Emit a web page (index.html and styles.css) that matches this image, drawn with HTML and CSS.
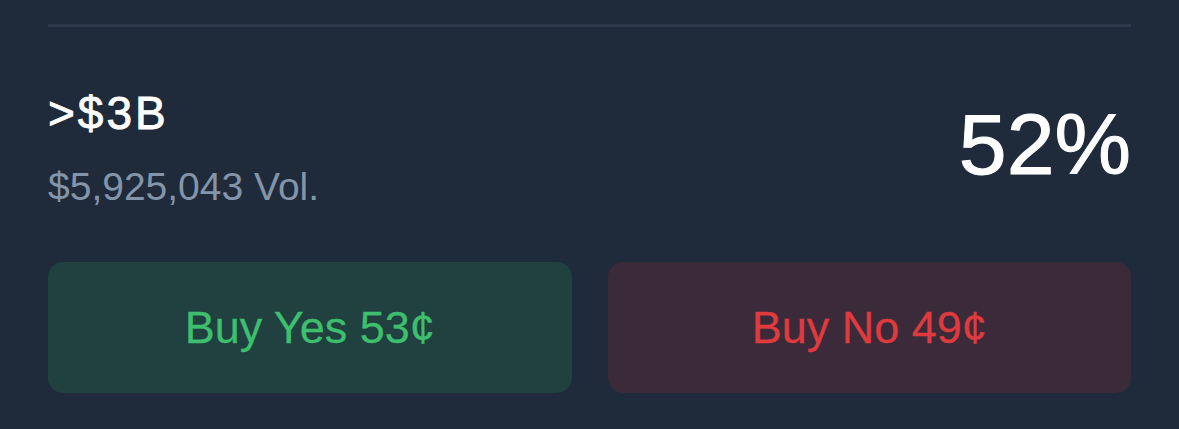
FILE: index.html
```html
<!DOCTYPE html>
<html lang="en">
<head>
<meta charset="utf-8">
<title>Market outcome</title>
<link rel="stylesheet" href="styles.css">
</head>
<body>
<section class="outcome">
  <div class="divider"></div>
  <div class="summary">
    <div class="info">
      <div class="title">&gt;$3B</div>
      <div class="volume">$5,925,043 Vol.</div>
    </div>
    <div class="chance">52%</div>
  </div>
  <div class="actions">
    <button class="btn btn-yes">Buy Yes 53¢</button>
    <button class="btn btn-no">Buy No 49¢</button>
  </div>
</section>
</body>
</html>
```
FILE: styles.css
```css
html, body {
  margin: 0;
  padding: 0;
  background: #1f2a3b;
}
body {
  font-family: "Liberation Sans", Arial, sans-serif;
  width: 1179px;
  height: 429px;
  overflow: hidden;
}
.outcome {
  padding: 24px 48px 0;
}
.divider {
  height: 3px;
  background: #2e3a4b;
}
.summary {
  display: flex;
  justify-content: space-between;
  align-items: center;
  margin-top: 60px;
}
.info {
  display: flex;
  flex-direction: column;
  gap: 25px;
}
.title {
  color: #ffffff;
  font-size: 46px;
  line-height: 52px;
  letter-spacing: 3px;
  -webkit-text-stroke: 0.9px #ffffff;
}
.volume {
  color: #8495a9;
  font-size: 39px;
  line-height: 46px;
}
.chance {
  color: #ffffff;
  font-size: 86px;
  line-height: 86px;
  -webkit-text-stroke: 1px #ffffff;
  margin-bottom: 10px;
}
.actions {
  display: grid;
  grid-template-columns: 1fr 1fr;
  gap: 36px;
  margin-top: 52px;
}
.btn {
  height: 131px;
  border: none;
  border-radius: 15px;
  font-family: inherit;
  font-size: 45px;
  display: flex;
  align-items: center;
  justify-content: center;
  padding: 0;
}
.btn-yes {
  background: #214040;
  color: #3dbf6d;
  -webkit-text-stroke: 0.3px #3dbf6d;
}
.btn-no {
  background: #3b2b3a;
  color: #df3a3d;
  -webkit-text-stroke: 0.3px #df3a3d;
}
```
